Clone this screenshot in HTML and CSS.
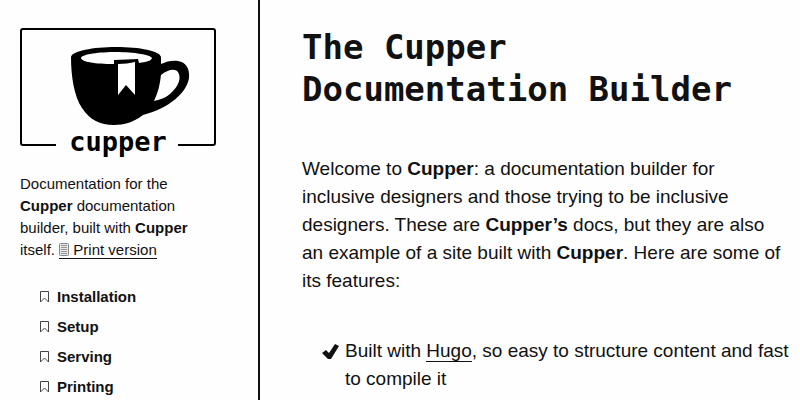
FILE: index.html
```html
<!DOCTYPE html>
<html lang="en">
<head>
<meta charset="utf-8">
<title>The Cupper Documentation Builder</title>
<link rel="stylesheet" href="styles.css">
</head>
<body>
<div class="layout">
  <header class="sidebar">
    <a class="logo" href="#" aria-label="Cupper home">
      <svg viewBox="0 0 196 132" aria-hidden="true">
        <path d="M36 117H3Q1 117 1 115V3Q1 1 3 1H193Q195 1 195 3V115Q195 117 193 117H158" fill="none" stroke="#000" stroke-width="2"/>
        <path fill="#000" fill-rule="evenodd" d="M51 29C52 23 73 19 96 19C120 19 140 23 141 29V36C147 33 153 32 158 33C166 34 170 41 169 50C167 64 150 80 123 87C114 94 104 97 94 97C80 97 70 92 62 80C54 68 51 48 51 29Z"/>
        <path fill="#fff" d="M61 30C62 26 80 24 96 24C114 24 131 27 132 30C131 33 126 34 119 35L118 31L94 32V36C75 36 62 34 61 30Z"/>
        <path fill="#fff" d="M98 36C104 36 110 35 115 34V67L106 57L98 67Z"/>
        <path fill="#fff" d="M141 47C147 42 155 40 158 44C162 50 158 59 151 65C146 70 139 72 134 73C138 65 140 56 141 47Z"/>
        <text class="logo-name" x="98" y="123" text-anchor="middle">cupper</text>
      </svg>
    </a>
    <p class="about">Documentation for the <strong>Cupper</strong> documentation builder, built with <strong>Cupper</strong> itself. <a class="link" href="#print"><svg class="page-icon" viewBox="0 0 10 13" aria-hidden="true"><rect x=".5" y=".5" width="9" height="12" rx="1" fill="#e4e4e4" stroke="#888"/><path d="M2 2.5H8M2 4.5H8M2 6.5H8M2 8.5H8M2 10.5H8" stroke="#999"/></svg> Print version</a></p>
    <nav aria-label="Documentation">
      <ul class="patterns">
        <li><a href="#installation"><svg class="bookmark" viewBox="0 0 9 12" aria-hidden="true"><path d="M.5 .5H8.5V11L4.5 7L.5 11Z"/></svg>Installation</a></li>
        <li><a href="#setup"><svg class="bookmark" viewBox="0 0 9 12" aria-hidden="true"><path d="M.5 .5H8.5V11L4.5 7L.5 11Z"/></svg>Setup</a></li>
        <li><a href="#serving"><svg class="bookmark" viewBox="0 0 9 12" aria-hidden="true"><path d="M.5 .5H8.5V11L4.5 7L.5 11Z"/></svg>Serving</a></li>
        <li><a href="#printing"><svg class="bookmark" viewBox="0 0 9 12" aria-hidden="true"><path d="M.5 .5H8.5V11L4.5 7L.5 11Z"/></svg>Printing</a></li>
      </ul>
    </nav>
  </header>
  <main class="content">
    <h1>The Cupper Documentation Builder</h1>
    <p class="intro">Welcome to <strong>Cupper</strong>: a documentation builder for inclusive designers and those trying to be inclusive designers. These are <strong>Cupper’s</strong> docs, but they are also an example of a site built with <strong>Cupper</strong>. Here are some of its features:</p>
    <ul class="features">
      <li><svg class="tick" viewBox="0 0 17 16" aria-hidden="true"><path d="M0 9L4 6L7 9L13 0L17 2L9 15L6 15Z"/></svg><span>Built with <a class="link" href="#hugo">Hugo</a>, so easy to structure content and fast to compile it</span></li>
    </ul>
  </main>
</div>
</body>
</html>
```
FILE: styles.css
```css
* {
  box-sizing: border-box;
}

body {
  margin: 0;
  color: #111;
  background: #fefefe;
  font-family: "Liberation Sans", Arial, sans-serif;
}

h1,
p,
ul {
  margin: 0;
  padding: 0;
}

ul {
  list-style: none;
}

a {
  color: inherit;
  text-decoration: none;
}

.layout {
  display: flex;
  height: 100vh;
  overflow: hidden;
}

.sidebar {
  flex: 0 0 260px;
  padding: 28px 42px 0 20px;
  border-right: 2px solid #111;
  font-size: 15px;
  line-height: 22px;
}

.logo,
.logo svg {
  display: block;
}

.logo-name {
  font: bold 27px "DejaVu Sans Mono", monospace;
}

.about {
  margin-top: 13px;
}

.link {
  border-bottom: 1px solid #111;
}

.page-icon {
  width: 10px;
  height: 13px;
  vertical-align: -1px;
}

.patterns {
  margin-top: 21px;
  padding-left: 20px;
}

.patterns a {
  display: flex;
  align-items: center;
  gap: 8px;
  font-weight: bold;
  line-height: 30px;
}

.bookmark {
  width: 9px;
  height: 12px;
  fill: none;
  stroke: #444;
}

.content {
  flex: 1;
  min-width: 0;
  padding: 26px 4px 0 42px;
  font-size: 19px;
  line-height: 28px;
}

h1 {
  font: bold 34px/42px "DejaVu Sans Mono", monospace;
  margin-bottom: 45px;
}

h1,
.intro {
  padding-right: 12px;
}

.features {
  margin-top: 42px;
  padding-left: 20px;
}

.features li {
  display: flex;
  gap: 6px;
}

.tick {
  flex: none;
  width: 17px;
  height: 16px;
  margin-top: 7px;
  fill: #111;
}
```
